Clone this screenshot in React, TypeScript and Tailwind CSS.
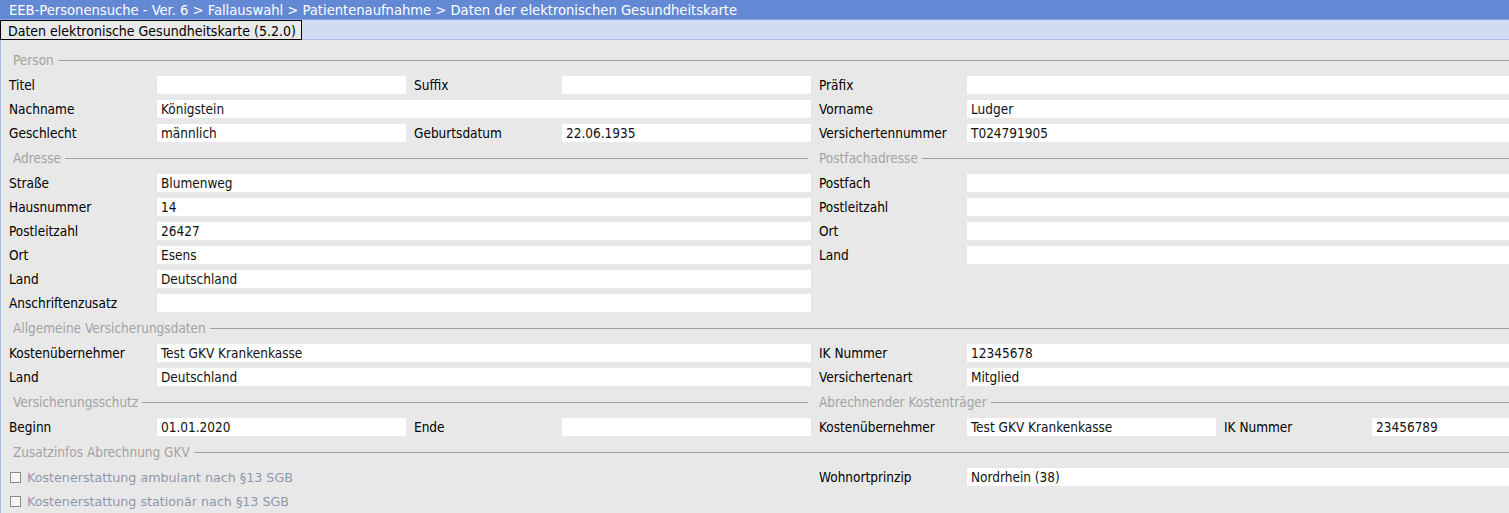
import React from "react";

type FeldProps = {
  label: string;
  wert?: string;
  breit?: "normal" | "doppelt" | "rest";
};

const Feld = ({ label, wert = "", breit = "normal" }: FeldProps) => {
  const inputBreite =
    breit === "doppelt" ? "w-[654px]" : breit === "rest" ? "flex-1 min-w-0" : "w-[249px]";
  return (
    <div className={`flex items-center h-[24px] shrink-0 ${breit === "rest" ? "flex-1 min-w-0" : "mr-2"}`}>
      <span className="w-[148px] shrink-0 pt-[2px] whitespace-nowrap text-black">{label}</span>
      <div className={`${inputBreite} h-[18px] bg-white pl-1 pt-[2px] flex items-center whitespace-nowrap overflow-hidden text-[#111]`}>
        {wert}
      </div>
    </div>
  );
};

const Zeile = ({ children }: { children: React.ReactNode }) => (
  <div className="flex items-center h-[24px] pl-[8px]">{children}</div>
);

// Abschnittsüberschrift mit Linie wie bei einem fieldset
const Titel = ({ text }: { text: string }) => (
  <div className="flex items-center flex-1 min-w-0">
    <span className="text-[#a3a3a3] pt-[2px] whitespace-nowrap">{text}</span>
    <div className="flex-1 ml-1 h-px bg-[#a0a0a0]" />
  </div>
);

const Abschnitt = ({ links, rechts }: { links: string; rechts?: string }) => (
  <div className="flex items-center h-[26px] pl-[8px]">
    {rechts ? (
      <>
        <div className="w-[799px] shrink-0 pl-1 flex">
          <Titel text={links} />
        </div>
        <div className="flex items-center flex-1 min-w-0 pl-[11px]">
          <Titel text={rechts} />
        </div>
      </>
    ) : (
      <div className="flex-1 pl-1 flex">
        <Titel text={links} />
      </div>
    )}
  </div>
);

const Checkbox = ({ text }: { text: string }) => (
  <div className="flex items-center w-[810px] shrink-0 h-[24px]">
    <span className="ml-[1px] w-[11px] h-[11px] border border-[#8a8a8a] bg-[#f4f4f4]" />
    <span className="ml-[6px] pt-[2px] text-[#8c98ab] whitespace-nowrap font-['DejaVu_Sans',sans-serif] text-[12.7px]">
      {text}
    </span>
  </div>
);

export default function App() {
  return (
    <div className="w-[1509px] h-[513px] overflow-hidden bg-[#e8e8e8] font-['DejaVu_Sans_Condensed','Tahoma','Liberation_Sans',sans-serif] text-[13.5px] leading-none">
      {/* Brotkrumen */}
      <div className="h-[20px] bg-[#6389d5] border-b border-[#8ea8e0] text-white text-[14.6px] flex items-center pl-[9px] pt-px whitespace-nowrap">
        EEB-Personensuche - Ver. 6 &gt; Fallauswahl &gt; Patientenaufnahme &gt; Daten der elektronischen Gesundheitskarte
      </div>

      {/* Reiter */}
      <div className="h-[20px] bg-[#d1dcf3] border-b border-[#a9bde6] flex items-end">
        <div className="h-[20px] -mb-px w-[302px] border border-black bg-[#e9e9e9] flex items-center pl-[7px] pt-px text-[14px] whitespace-nowrap">
          Daten elektronische Gesundheitskarte (5.2.0)
        </div>
      </div>

      <div className="border-l border-[#a9bde6] pt-[7px] h-[473px]">
        <Abschnitt links="Person" />
        <Zeile>
          <Feld label="Titel" />
          <Feld label="Suffix" />
          <Feld label="Präfix" breit="rest" />
        </Zeile>
        <Zeile>
          <Feld label="Nachname" wert="Königstein" breit="doppelt" />
          <Feld label="Vorname" wert="Ludger" breit="rest" />
        </Zeile>
        <Zeile>
          <Feld label="Geschlecht" wert="männlich" />
          <Feld label="Geburtsdatum" wert="22.06.1935" />
          <Feld label="Versichertennummer" wert="T024791905" breit="rest" />
        </Zeile>

        <Abschnitt links="Adresse" rechts="Postfachadresse" />
        <Zeile>
          <Feld label="Straße" wert="Blumenweg" breit="doppelt" />
          <Feld label="Postfach" breit="rest" />
        </Zeile>
        <Zeile>
          <Feld label="Hausnummer" wert="14" breit="doppelt" />
          <Feld label="Postleitzahl" breit="rest" />
        </Zeile>
        <Zeile>
          <Feld label="Postleitzahl" wert="26427" breit="doppelt" />
          <Feld label="Ort" breit="rest" />
        </Zeile>
        <Zeile>
          <Feld label="Ort" wert="Esens" breit="doppelt" />
          <Feld label="Land" breit="rest" />
        </Zeile>
        <Zeile>
          <Feld label="Land" wert="Deutschland" breit="doppelt" />
        </Zeile>
        <Zeile>
          <Feld label="Anschriftenzusatz" breit="doppelt" />
        </Zeile>

        <Abschnitt links="Allgemeine Versicherungsdaten" />
        <Zeile>
          <Feld label="Kostenübernehmer" wert="Test GKV Krankenkasse" breit="doppelt" />
          <Feld label="IK Nummer" wert="12345678" breit="rest" />
        </Zeile>
        <Zeile>
          <Feld label="Land" wert="Deutschland" breit="doppelt" />
          <Feld label="Versichertenart" wert="Mitglied" breit="rest" />
        </Zeile>

        <Abschnitt links="Versicherungsschutz" rechts="Abrechnender Kostenträger" />
        <Zeile>
          <Feld label="Beginn" wert="01.01.2020" />
          <Feld label="Ende" />
          <Feld label="Kostenübernehmer" wert="Test GKV Krankenkasse" />
          <Feld label="IK Nummer" wert="23456789" />
        </Zeile>

        <Abschnitt links="Zusatzinfos Abrechnung GKV" />
        <Zeile>
          <Checkbox text="Kostenerstattung ambulant nach §13 SGB" />
          <Feld label="Wohnortprinzip" wert="Nordrhein (38)" breit="rest" />
        </Zeile>
        <Zeile>
          <Checkbox text="Kostenerstattung stationär nach §13 SGB" />
        </Zeile>
      </div>
    </div>
  );
}
